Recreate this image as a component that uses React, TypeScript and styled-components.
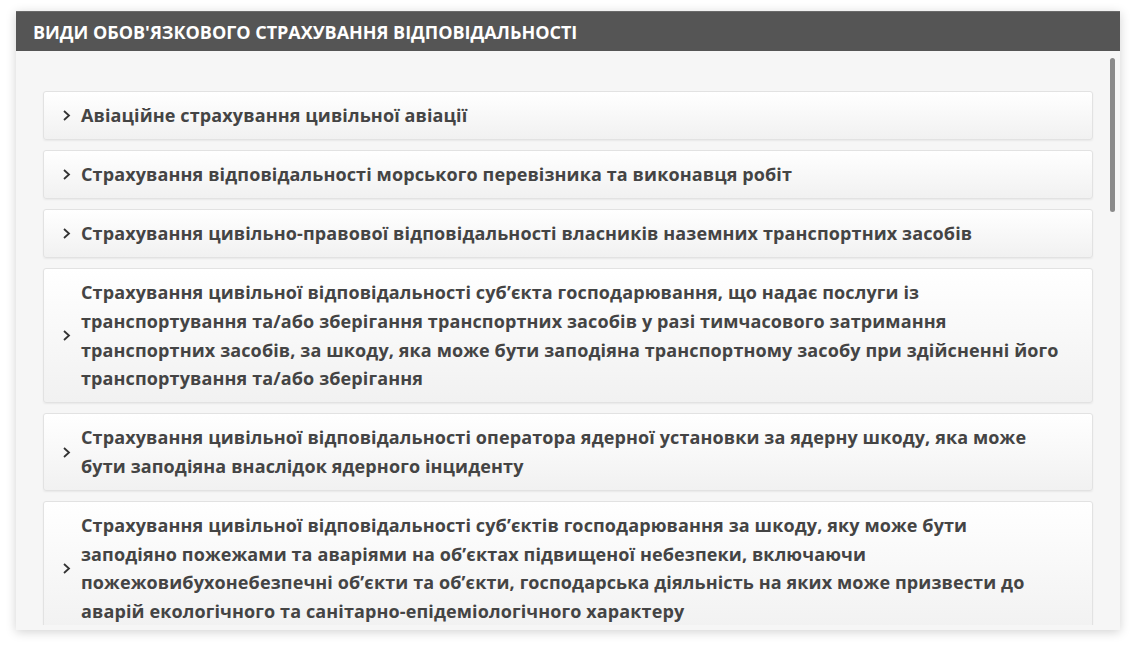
import React from "react";
import styled, { createGlobalStyle } from "styled-components";

const GlobalStyle = createGlobalStyle`
  html, body {
    margin: 0;
    padding: 0;
    background: #ffffff;
    font-family: "Open Sans", "Noto Sans", sans-serif;
  }
`;

const Page = styled.div`
  padding: 11px 16px 0 16px;
  height: 653px;
  box-sizing: border-box;
`;

const Panel = styled.section`
  position: relative;
  width: 1104px;
  height: 619px;
  display: flex;
  flex-direction: column;
  background: #f6f6f6;
  box-shadow: 0 2px 10px rgba(0, 0, 0, 0.18);
`;

const Header = styled.h2`
  margin: 0;
  height: 40px;
  flex: 0 0 40px;
  display: flex;
  align-items: center;
  padding: 0 17px;
  background: #555555;
  color: #ffffff;
  font-size: 18px;
  font-weight: 700;
  text-transform: uppercase;
  letter-spacing: -0.03px;
  border-top: 1px solid #6a6a6a;
  box-sizing: border-box;
`;

const Body = styled.div`
  flex: 1;
  overflow: hidden;
  padding: 40px 27px 0 27px;
  display: flex;
  flex-direction: column;
  gap: 10px;
  margin-bottom: 5px;
`;

const ScrollThumb = styled.div`
  position: absolute;
  right: 5px;
  top: 47px;
  width: 5px;
  height: 154px;
  border-radius: 3px;
  background: #8a8a8a;
`;

const Item = styled.button`
  flex: 0 0 auto;
  display: flex;
  align-items: center;
  gap: 10px;
  width: 100%;
  padding: 9.2px 30px 9.2px 18px;
  box-sizing: border-box;
  text-align: left;
  border: 1px solid #e2e2e2;
  border-radius: 3px;
  background: linear-gradient(to bottom, #ffffff 0%, #f1f1f1 100%);
  box-shadow: 0 1px 2px rgba(0, 0, 0, 0.06);
  cursor: pointer;
  font-family: inherit;
`;

const Chevron = styled.svg`
  flex: 0 0 9px;
  width: 9px;
  height: 13px;
`;

const Label = styled.span`
  color: #444444;
  font-size: 18px;
  font-weight: 700;
  line-height: 28.67px;
  letter-spacing: 0.12px;
`;

const items = [
  "Авіаційне страхування цивільної авіації",
  "Страхування відповідальності морського перевізника та виконавця робіт",
  "Страхування цивільно-правової відповідальності власників наземних транспортних засобів",
  "Страхування цивільної відповідальності суб’єкта господарювання, що надає послуги із транспортування та/або зберігання транспортних засобів у разі тимчасового затримання транспортних засобів, за шкоду, яка може бути заподіяна транспортному засобу при здійсненні його транспортування та/або зберігання",
  "Страхування цивільної відповідальності оператора ядерної установки за ядерну шкоду, яка може бути заподіяна внаслідок ядерного інциденту",
  "Страхування цивільної відповідальності суб’єктів господарювання за шкоду, яку може бути заподіяно пожежами та аваріями на об’єктах підвищеної небезпеки, включаючи пожежовибухонебезпечні об’єкти та об’єкти, господарська діяльність на яких може призвести до аварій екологічного та санітарно-епідеміологічного характеру",
];

export default function App() {
  return (
    <>
      <GlobalStyle />
      <Page>
        <Panel>
          <Header>Види обов'язкового страхування відповідальності</Header>
          <Body>
            {items.map((t) => (
              <Item key={t}>
                <Chevron viewBox="0 0 9 13">
                  <path d="M2 2 L7 6.5 L2 11" fill="none" stroke="#333" strokeWidth="1.8" />
                </Chevron>
                <Label>{t}</Label>
              </Item>
            ))}
          </Body>
          <ScrollThumb />
        </Panel>
      </Page>
    </>
  );
}
